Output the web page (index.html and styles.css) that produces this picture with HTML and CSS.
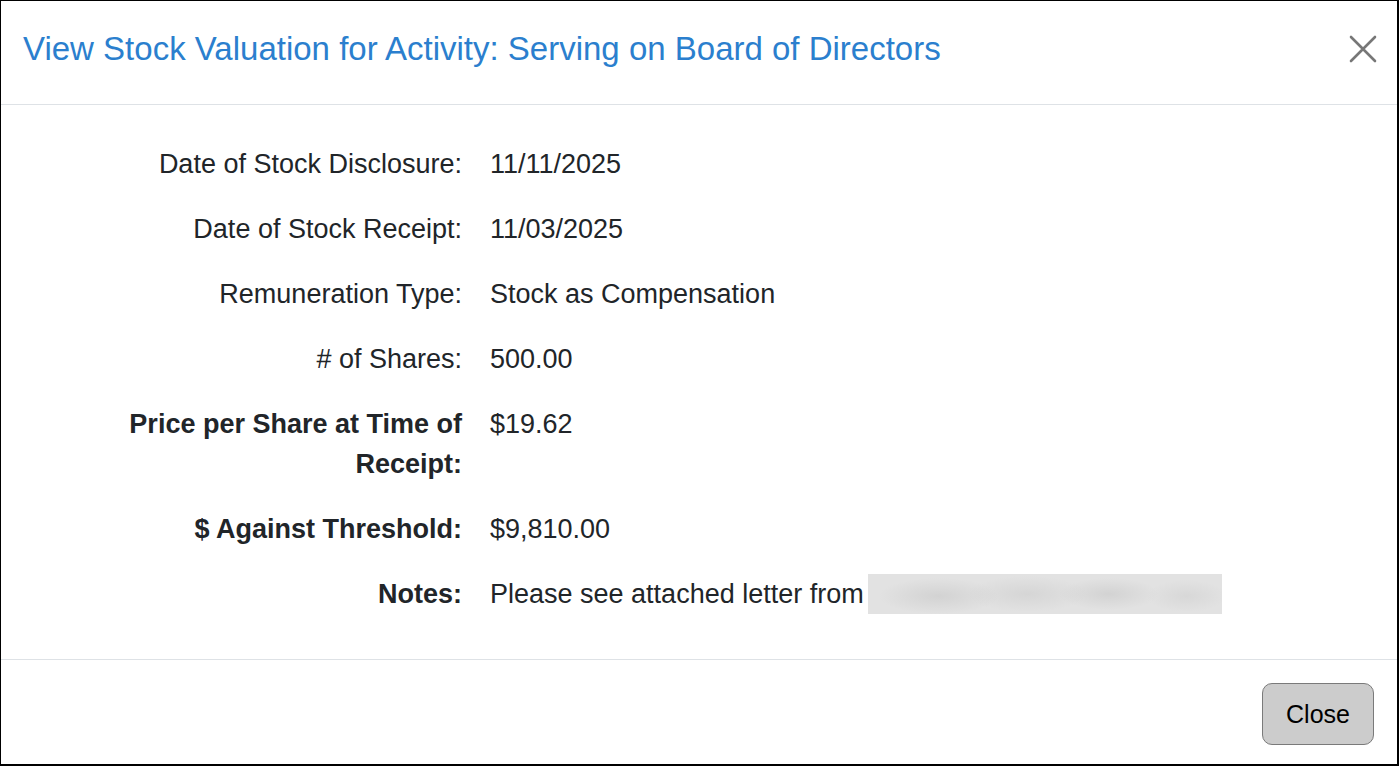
FILE: index.html
```html
<!DOCTYPE html>
<html lang="en">
<head>
<meta charset="utf-8">
<title>View Stock Valuation</title>
<link rel="stylesheet" href="styles.css">
</head>
<body>
<div class="modal">
  <div class="modal-header">
    <h1 class="modal-title">View Stock Valuation for Activity: Serving on Board of Directors</h1>
    <button class="close-x" aria-label="Close">
      <svg width="28" height="28" viewBox="0 0 28 28"><path d="M2 2 L26 26 M26 2 L2 26" stroke="#777" stroke-width="2.6" fill="none" stroke-linecap="round"/></svg>
    </button>
  </div>
  <div class="modal-body">
    <dl class="details">
      <dt>Date of Stock Disclosure:</dt><dd>11/11/2025</dd>
      <dt>Date of Stock Receipt:</dt><dd>11/03/2025</dd>
      <dt>Remuneration Type:</dt><dd>Stock as Compensation</dd>
      <dt># of Shares:</dt><dd>500.00</dd>
      <dt class="bold">Price per Share at Time of Receipt:</dt><dd>$19.62</dd>
      <dt class="bold">$ Against Threshold:</dt><dd>$9,810.00</dd>
      <dt class="bold">Notes:</dt><dd>Please see attached letter from <span class="redacted"></span></dd>
    </dl>
  </div>
  <div class="modal-footer">
    <button class="btn-close">Close</button>
  </div>
</div>
</body>
</html>
```

FILE: styles.css
```css
* { box-sizing: border-box; }
html, body { margin: 0; padding: 0; }
body {
  font-family: "Liberation Sans", Arial, sans-serif;
  color: #212529;
  background: #fff;
}
.modal {
  width: 1399px;
  height: 766px;
  border: 1px solid #000;
  border-right-width: 2px;
  border-bottom-width: 2px;
  display: flex;
  flex-direction: column;
  background: #fff;
}
.modal-header {
  display: flex;
  align-items: center;
  justify-content: space-between;
  padding: 28px 20px 35px 22px;
  border-bottom: 1px solid #dee2e6;
}
.modal-title {
  margin: 0;
  font-size: 33px;
  font-weight: normal;
  line-height: 40px;
  color: #2b7fce;
}
.close-x {
  border: 0;
  background: transparent;
  padding: 0;
  width: 28px;
  height: 28px;
  display: flex;
  cursor: pointer;
}
.modal-body {
  flex: 1;
  padding: 39px 0 0 0;
  border-bottom: 1px solid #dee2e6;
}
.details {
  margin: 0;
  display: grid;
  grid-template-columns: 360px 1fr;
  column-gap: 28px;
  row-gap: 25px;
  padding-left: 101px;
  font-size: 27px;
  line-height: 40px;
}
.details dt {
  text-align: right;
  font-weight: normal;
}
.details dt.bold { font-weight: bold; }
.details dd { margin: 0; }
.redacted {
  display: inline-block;
  vertical-align: middle;
  width: 354px;
  height: 40px;
  margin-top: -4px;
  margin-left: -3px;
  background:
    radial-gradient(ellipse 60px 18px at 20% 55%, rgba(200,200,200,0.6), rgba(200,200,200,0)),
    radial-gradient(ellipse 60px 18px at 45% 50%, rgba(205,205,205,0.6), rgba(205,205,205,0)),
    radial-gradient(ellipse 50px 16px at 68% 50%, rgba(200,200,200,0.6), rgba(200,200,200,0)),
    radial-gradient(ellipse 40px 16px at 90% 55%, rgba(205,205,205,0.5), rgba(205,205,205,0)),
    #e2e2e2;
}
.modal-footer {
  display: flex;
  justify-content: flex-end;
  padding: 23px 23px 0 0;
  height: 104px;
}
.btn-close {
  width: 112px;
  height: 62px;
  background: #cccccc;
  border: 1px solid #7a7a7a;
  border-radius: 10px;
  font-family: "Liberation Sans", Arial, sans-serif;
  font-size: 25px;
  color: #000;
  cursor: pointer;
}
```
